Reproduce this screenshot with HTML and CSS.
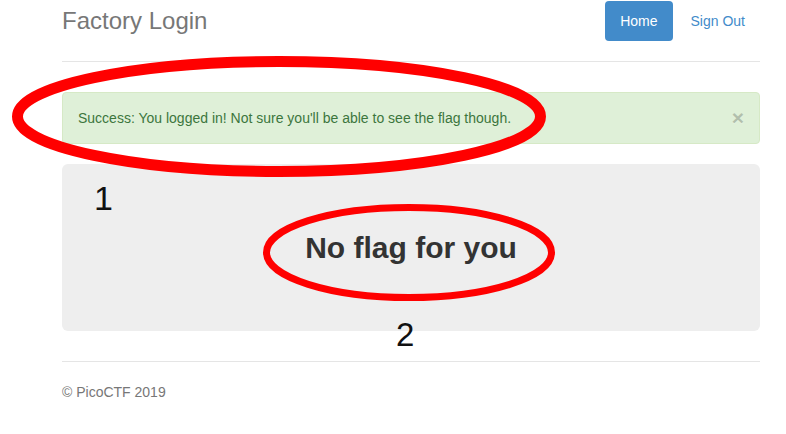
FILE: index.html
```html
<!DOCTYPE html>
<html lang="en">
<head>
<meta charset="utf-8">
<title>Factory Login</title>
<link rel="stylesheet" href="styles.css">
</head>
<body>
<div class="page">
  <div class="container">
    <header class="header">
      <h3 class="brand">Factory Login</h3>
      <nav class="nav">
        <a class="pill active" href="#">Home</a>
        <a class="pill" href="#">Sign Out</a>
      </nav>
    </header>

    <div class="alert">
      <span>Success: You logged in! Not sure you'll be able to see the flag though.</span>
      <button class="close" type="button">&times;</button>
    </div>

    <div class="jumbotron">
      <h2 class="flag">No flag for you</h2>
    </div>

    <footer class="footer">
      <p>&copy; PicoCTF 2019</p>
    </footer>
  </div>

  <svg class="marks" width="786" height="434" viewBox="0 0 786 434" aria-hidden="true">
    <ellipse cx="279" cy="116.5" rx="261.5" ry="55" fill="none" stroke="#ff0000" stroke-width="11"/>
    <ellipse cx="409" cy="252.5" rx="142.5" ry="45" fill="none" stroke="#ff0000" stroke-width="7"/>
  </svg>
  <span class="note note-1">1</span>
  <span class="note note-2">2</span>
</div>
</body>
</html>
```

FILE: styles.css
```css
html, body {
  margin: 0;
  padding: 0;
  background: #fff;
}

body {
  font-family: "Liberation Sans", Arial, sans-serif;
  font-size: 14px;
  line-height: 20px;
  color: #333;
}

.page {
  position: relative;
  width: 786px;
  height: 434px;
  overflow: hidden;
  padding-top: 1px;
  box-sizing: border-box;
}

.container {
  width: 698px;
  margin-left: 62px;
}

.header {
  display: flex;
  justify-content: space-between;
  align-items: center;
  padding-bottom: 20px;
  border-bottom: 1px solid #e5e5e5;
  margin-bottom: 30px;
}

.brand {
  margin: 0;
  font-size: 24px;
  line-height: 40px;
  font-weight: normal;
  color: #777;
}

.nav {
  display: flex;
  gap: 3px;
}

.pill {
  display: block;
  padding: 10px 15px;
  line-height: 20px;
  border-radius: 4px;
  color: #428bca;
  text-decoration: none;
}

.pill.active {
  background: #428bca;
  color: #fff;
}

.alert {
  display: flex;
  justify-content: space-between;
  align-items: center;
  padding: 15px;
  margin-bottom: 20px;
  border: 1px solid #d6e9c6;
  border-radius: 4px;
  background: #dff0d8;
  color: #3c763d;
}

.close {
  padding: 0;
  border: 0;
  background: transparent;
  font-family: "Liberation Sans", Arial, sans-serif;
  font-size: 21px;
  font-weight: bold;
  line-height: 20px;
  color: #000;
  opacity: 0.2;
  text-shadow: 0 1px 0 #fff;
  cursor: pointer;
}

.jumbotron {
  display: flex;
  align-items: center;
  justify-content: center;
  height: 167px;
  margin-bottom: 30px;
  border-radius: 6px;
  background: #eee;
}

.flag {
  margin: 0;
  font-size: 30px;
  line-height: 33px;
  font-weight: bold;
  color: #333;
}

.footer {
  padding-top: 20px;
  border-top: 1px solid #e5e5e5;
  color: #777;
}

.footer p {
  margin: 0;
}

.marks {
  position: absolute;
  left: 0;
  top: 0;
  pointer-events: none;
}

.note {
  position: absolute;
  font-family: "Liberation Sans", Arial, sans-serif;
  font-size: 34px;
  line-height: 1;
  color: #111;
}

.note-1 {
  left: 94px;
  top: 181px;
}

.note-2 {
  left: 396px;
  top: 318px;
  font-size: 33px;
}
```
